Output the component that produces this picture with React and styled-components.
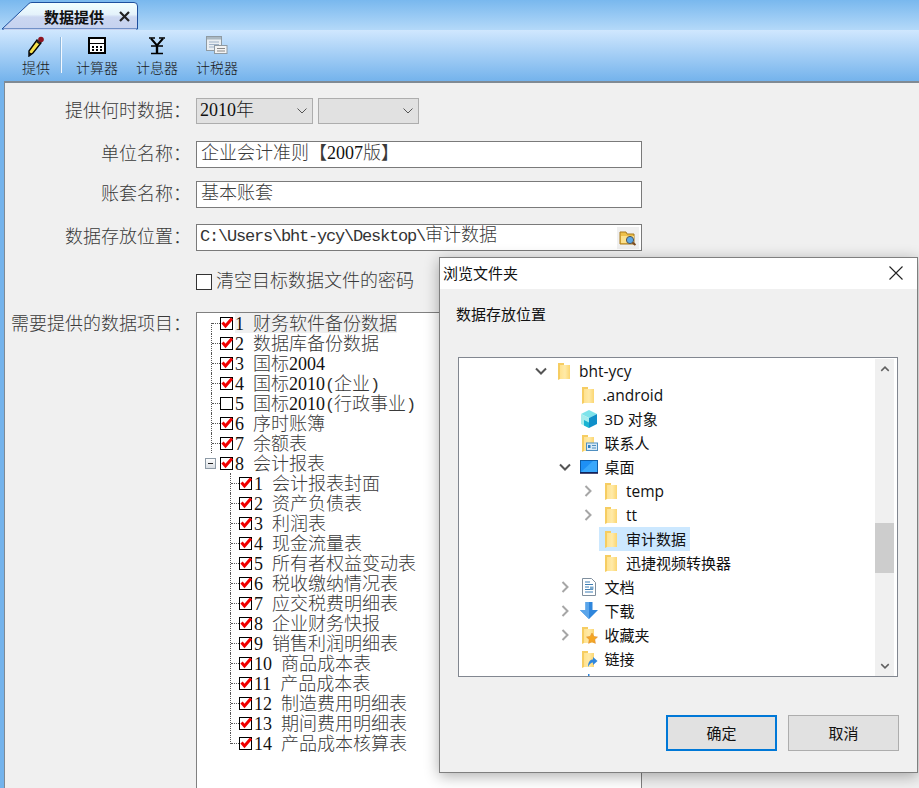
import React from "react";
import styled, { createGlobalStyle } from "styled-components";

const GlobalStyle = createGlobalStyle`
  html, body {
    margin: 0;
    padding: 0;
    overflow: hidden;
    background: #f0f0f0;
  }
  * { box-sizing: border-box; }
`;

const Page = styled.div`
  position: relative;
  width: 919px;
  height: 788px;
  overflow: hidden;
  background: linear-gradient(#d0e7fe 30px, #74b3ec 81px, #74b3ec);
  font-family: "Liberation Serif", "Noto Sans CJK SC", serif;
  font-weight: 300;
  color: #3a3a3a;
`;

const TabStrip = styled.div`
  height: 30px;
  padding: 2px 0 0 2px;
  background: linear-gradient(#79b8ee, #b4d9f9);
`;

const Tab = styled.div`
  position: relative;
  width: 137px;
  height: 28px;
  display: flex;
  align-items: center;
  padding-left: 42px;
  font-family: "Noto Sans CJK SC", sans-serif;
  font-size: 15px;
  font-weight: 700;
  color: #111;

  > svg:first-child {
    position: absolute;
    left: 0;
    top: 0;
  }
  span, svg:last-child { position: relative; }
  svg:last-child { margin-left: 15px; }
`;

const Toolbar = styled.div`
  height: 51px;
  display: flex;
  align-items: flex-start;
  padding: 5px 0 0 22px;
`;

const ToolItem = styled.div`
  display: flex;
  flex-direction: column;
  align-items: center;
  margin-right: 18px;
  font-size: 14px;
  line-height: 20px;
  color: #1a1a1a;
  svg { display: block; height: 22px; margin-bottom: 2px; }
`;

const ToolSep = styled.div`
  width: 1px;
  height: 36px;
  margin: 2px 14px 0 -7px;
  background: #f4f9ff;
  box-shadow: -1px 0 0 #8db7dd;
`;

const Content = styled.div`
  height: 707px;
  margin-left: 4px;
  border-left: 1px solid #7f8a94;
  border-top: 2px solid #808a94;
  background: #f0f0f0;
  padding-top: 15px;
`;

const FormRow = styled.div`
  display: grid;
  grid-template-columns: 186px 1fr;
  column-gap: 5px;
  margin-top: ${(p) => p.$gap || 0}px;
  align-items: ${(p) => (p.$top ? "start" : "center")};
`;

const Label = styled.div`
  text-align: right;
  font-size: 18px;
  line-height: 24px;
  white-space: nowrap;
  padding-bottom: ${(p) => (p.$lift ? 2 : 0)}px;
`;

const Latin = styled.span`
  font-family: "Liberation Mono", monospace;
  font-weight: 400;
  font-size: 17px;
  letter-spacing: -1.2px;
  white-space: pre;
  color: #333;
`;

const Digits = styled.span`
  font-family: "Liberation Serif", serif;
  font-weight: 400;
  font-size: 18px;
  color: #111;
`;

const Mixed = ({ text }) =>
  text.split(/(\d+|[\x20-\x7e]+?(?=\d|[^\x20-\x7e]|$))/).map((part, i) => {
    if (/^\d+$/.test(part)) return <Digits key={i}>{part}</Digits>;
    if (/^[\x20-\x7e]+$/.test(part)) return <Latin key={i}>{part}</Latin>;
    return part;
  });

const SelectGroup = styled.div`
  display: flex;
  gap: 5px;
`;

const Select = styled.div`
  width: ${(p) => p.$width}px;
  height: 26px;
  display: flex;
  align-items: center;
  justify-content: space-between;
  padding: 0 4px 0 3px;
  border: 1px solid #adadad;
  background: #e1e1e1;
  font-size: 18px;
  color: #222;
`;

const FieldText = styled.span`
  margin-bottom: ${(p) => p.$lift}px;
  margin-left: ${(p) => p.$indent || 0}px;
  line-height: 20px;
`;

const Input = styled.div`
  width: 446px;
  height: 27px;
  display: flex;
  align-items: center;
  justify-content: space-between;
  padding: 0 2px 0 4px;
  border: 1px solid #7a7a7a;
  background: #fff;
  font-size: 18px;
  white-space: nowrap;
`;

const BrowseButton = styled.div`
  width: 22px;
  height: 22px;
  display: flex;
  align-items: center;
  justify-content: center;
  background: #f0f0f0;
`;

const CheckLine = styled.div`
  display: flex;
  align-items: center;
  font-size: 18px;
  height: 16px;
`;

const BigCheck = styled.span`
  width: 16px;
  height: 16px;
  margin-right: 4px;
  border: 1px solid #333;
  background: #fff;
`;

const TreePanel = styled.div`
  width: 446px;
  height: 520px;
  border: 1px solid #808080;
  background: #fff;
`;

const TreeRow = styled.div`
  height: 20px;
  display: flex;
  align-items: flex-start;
  padding-left: ${(p) => (p.$depth ? 33 : 14)}px;
  font-size: 18px;
  white-space: nowrap;
`;

const Elbow = styled.span`
  position: relative;
  width: 9px;
  height: 20px;
  flex: none;

  &::before {
    content: "";
    position: absolute;
    left: 0;
    top: ${(p) => (p.$first ? "10px" : "0")};
    height: ${(p) => (p.$last || p.$first ? "11px" : "20px")};
    border-left: 1px dotted #555;
  }
  &::after {
    content: "";
    position: absolute;
    left: 1px;
    width: 8px;
    top: 10px;
    border-top: 1px dotted #555;
  }
`;

const Expander = styled.span`
  position: relative;
  width: 11px;
  height: 11px;
  flex: none;
  margin: 5px 4px 0 -6px;
  border: 1px solid #8d9aa6;
  background: linear-gradient(#fff, #d8dde3);

  &::after {
    content: "";
    position: absolute;
    left: 2px;
    right: 2px;
    top: 4px;
    height: 1px;
    background: #222;
  }
`;

const TreeCheck = styled.span`
  width: 13px;
  height: 13px;
  flex: none;
  margin: 4px 2px 0 0;
  border: 1px solid #000;
  background: #fff;
  svg { display: block; margin: -1px 0 0 0; overflow: visible; }
`;

const TreeText = styled.span`
  background: ${(p) => (p.$hover ? "#f0f0f0" : "transparent")};
  line-height: 22px;
  height: 20px;
`;

const Dialog = styled.div`
  position: absolute;
  left: 439px;
  top: 257px;
  width: 479px;
  height: 516px;
  border: 1px solid #7f7f7f;
  background: #f0f0f0;
  box-shadow: 0 3px 14px rgba(0, 0, 0, 0.32);
  font-family: "Open Sans", "Noto Sans CJK SC", sans-serif;
  font-weight: 400;
  font-size: 15px;
  color: #111;
`;

const DialogTitle = styled.div`
  height: 31px;
  display: flex;
  align-items: center;
  justify-content: space-between;
  padding: 0 14px 2px 3px;
  background: #fff;
`;

const DialogBody = styled.div`
  padding: 15px 18px 0 16px;
`;

const DialogLabel = styled.div`
  height: 20px;
  line-height: 20px;
`;

const FolderBox = styled.div`
  display: flex;
  width: 440px;
  height: 320px;
  margin: 33px 0 0 2px;
  padding: 1px 3px 0 0;
  border: 1px solid #828790;
  background: #fff;
`;

const FolderRows = styled.div`
  flex: 1;
  overflow: hidden;
`;

const FolderRow = styled.div`
  height: 24px;
  display: flex;
  align-items: center;
  padding-left: ${(p) => 74 + p.$depth * 23.5}px;
  white-space: nowrap;
`;

const Toggle = styled.span`
  width: 16px;
  height: 16px;
  flex: none;
  margin-right: 3px;
  svg { display: block; }
`;

const FolderLabel = styled.span`
  display: flex;
  align-items: center;
  gap: 7px;
  height: 24px;
  padding: 0 4px;
  background: ${(p) => (p.$selected ? "#cce8ff" : "transparent")};
  svg { display: block; flex: none; }
`;

const FolderName = styled.span`
  font-size: ${(p) => (p.$latin ? "15.500px" : "15px")};
  margin-bottom: ${(p) => (p.$latin ? 0 : 2)}px;
`;

const Scrollbar = styled.div`
  width: 19px;
  display: flex;
  flex-direction: column;
  background: #f0f0f0;
`;

const ScrollArrow = styled.div`
  height: 20px;
  display: flex;
  align-items: center;
  justify-content: center;
  margin-top: ${(p) => (p.$end ? "auto" : "0")};
`;

const ScrollThumb = styled.div`
  height: 50px;
  margin-top: 144px;
  background: #cdcdcd;
`;

const ButtonRow = styled.div`
  display: flex;
  justify-content: flex-end;
  gap: 11px;
  margin-top: 38px;
`;

const DialogButton = styled.div`
  width: 111px;
  height: 36px;
  display: flex;
  align-items: center;
  justify-content: center;
  padding-bottom: 2px;
  background: #e1e1e1;
  border: ${(p) => (p.$primary ? "2px solid #0078d7" : "1px solid #adadad")};
`;

const Chevron = ({ open, up, color, size = 16 }) => (
  <svg width={size} height={size} viewBox="0 0 16 16" fill="none" stroke={color} strokeWidth="2">
    <path d={up ? "M3 10.500l5-5 5 5" : open ? "M3 5.500l5 5 5-5" : "M5.500 3l5 5-5 5"} />
  </svg>
);

const SelectChevron = () => (
  <svg width="12" height="8" viewBox="0 0 12 8" fill="none" stroke="#555" strokeWidth="1">
    <path d="M1.500 1.500L6 6l4.500-4.500" />
  </svg>
);

const PenIcon = () => (
  <svg width="20" height="22" viewBox="0 0 20 22">
    <path d="M11 5l4 3-8 10-4 3 0-5z" fill="#f6e04a" stroke="#000" strokeWidth="1.400" />
    <path d="M11.500 5l3.500 2.500-1.600 2-3.400-2.500z" fill="#222" />
    <circle cx="15" cy="4.500" r="2.800" fill="#8e1420" />
    <path d="M3 17v4l3-2.200z" fill="#111" />
  </svg>
);

const CalcIcon = () => (
  <svg width="18" height="22" viewBox="0 0 18 18">
    <rect x="0" y="0" width="18" height="17" fill="#000" />
    <rect x="2" y="2" width="14" height="4" fill="#fff" />
    <rect x="2" y="7" width="14" height="8" fill="#fff" />
    <path d="M4 9h2v2H4zM8 9h2v2H8zM12 9h2v2h-2zM4 12h2v2H4zM8 12h2v2H8zM12 12h2v2h-2z" fill="#000" />
  </svg>
);

const YenIcon = () => (
  <svg width="20" height="22" viewBox="0 0 20 20" fill="none" stroke="#000">
    <path d="M2 2h6M12 2h6" strokeWidth="1.600" />
    <path d="M4 2.500l6 7 6-7" strokeWidth="2" />
    <path d="M10 9v8" strokeWidth="2.400" />
    <path d="M4 10h12M4 17.500h12" strokeWidth="1.400" />
  </svg>
);

const TaxIcon = () => (
  <svg width="22" height="22" viewBox="0 0 22 20">
    <rect x="0.500" y="0.500" width="15" height="14" fill="#e9eef2" stroke="#8f9aa2" />
    <rect x="1" y="1" width="14" height="2.500" fill="#aab8c2" />
    <path d="M3 6h10M3 8.500h10M3 11h10" stroke="#9fb2c8" />
    <rect x="8.500" y="9.500" width="12.500" height="8" fill="#f3f3f3" stroke="#8f9aa2" />
    <path d="M11 12.500h8M11 15h8" stroke="#888" />
  </svg>
);

const CloseTabIcon = () => (
  <svg width="11" height="11" viewBox="0 0 11 11" stroke="#222" strokeWidth="2.200">
    <path d="M1 1l9 9M10 1l-9 9" />
  </svg>
);

const TabShape = () => (
  <svg width="137" height="28" viewBox="0 0 137 28">
    <defs>
      <linearGradient id="tabFill" x1="0" y1="0" x2="0" y2="1">
        <stop offset="0" stopColor="#f2ffff" />
        <stop offset="0.450" stopColor="#e4f2fb" />
        <stop offset="0.550" stopColor="#cbd7f1" />
        <stop offset="1" stopColor="#c5d2ef" />
      </linearGradient>
    </defs>
    <path d="M0 27L27 1.500Q28 .5 30 .5H132Q135.500 .5 135.500 4V27z" fill="url(#tabFill)" stroke="#1d4f9e" />
    <path d="M2 28h132" stroke="#c5d2ef" strokeWidth="2" />
  </svg>
);

const RedTick = () => (
  <svg width="11" height="12" viewBox="0 0 11 12" fill="none" stroke="#f00000" strokeWidth="3">
    <path d="M1.500 5.500l3 3.500L11 1.500" />
  </svg>
);

const BrowseIcon = () => (
  <svg width="18" height="16" viewBox="0 0 18 16">
    <path d="M1 2h6l1 2h7v10H1z" fill="#eec04a" stroke="#a87a1e" />
    <path d="M2 6h13v7H2z" fill="#fbe08c" />
    <circle cx="11" cy="10" r="3.600" fill="#5aa8e8" stroke="#555" />
    <path d="M13.500 12.500l3 2.500" stroke="#7a4a20" strokeWidth="2" />
  </svg>
);

const FolderShape = () => (
  <>
    <defs>
      <linearGradient id="folderFill" x1="0" y1="0" x2="1" y2="0">
        <stop offset="0" stopColor="#ffe28f" />
        <stop offset="0.500" stopColor="#ffeaa8" />
        <stop offset="1" stopColor="#fbd672" />
      </linearGradient>
    </defs>
    <path d="M2 1h6v3H4v13l-2 1z" fill="#f6cd62" />
    <path d="M4 3h10v14H4z" fill="url(#folderFill)" />
  </>
);

const FolderIcon = () => (
  <svg width="16" height="18" viewBox="0 0 16 18">
    <FolderShape />
  </svg>
);

const CubeIcon = () => (
  <svg width="18" height="18" viewBox="0 0 18 18">
    <path d="M9 0l8 4-8 4-8-4z" fill="#7de3ea" />
    <path d="M1 4l8 4v10l-8-4z" fill="#a5ecec" />
    <path d="M17 4L9 8v10l8-4z" fill="#0f8fc9" />
    <path d="M4 10l5 2.500V18l-5-2.500z" fill="#1ab4d2" />
  </svg>
);

const ContactIcon = () => (
  <svg width="18" height="18" viewBox="0 0 18 18">
    <FolderShape />
    <rect x="6.500" y="9" width="11" height="7.500" fill="#d8eaf6" stroke="#4f8fc0" />
    <rect x="8" y="11" width="2.500" height="3" fill="#2f7fc0" />
    <path d="M12 11.500h4M12 14h4" stroke="#4f8fc0" />
  </svg>
);

const DesktopIcon = () => (
  <svg width="18" height="18" viewBox="0 0 18 18">
    <rect x="0.500" y="2.500" width="17" height="12" fill="#1e90f5" stroke="#0f5da8" />
    <path d="M1 14L13 3h4v11z" fill="#3aa8fb" />
    <path d="M0 15h18" stroke="#114" strokeWidth="1.500" />
  </svg>
);

const DocIcon = () => (
  <svg width="18" height="18" viewBox="0 0 18 18">
    <path d="M2.500 0.500h9l4 4v13h-13z" fill="#fff" stroke="#7f8f9e" />
    <path d="M5 4h5M5 6.500h8M5 9h4M5 11.500h8M5 14h8" stroke="#3f7fb5" />
    <path d="M10 8.500h3.500v3H10z" fill="#7aa8cc" />
  </svg>
);

const DownloadIcon = () => (
  <svg width="18" height="18" viewBox="0 0 18 18">
    <path d="M5.500 0h7v8H18l-9 9-9-9h5.500z" fill="#2f86dc" />
    <path d="M5.500 0h3.500v17L0 8h5.500z" fill="#5aa5ea" />
  </svg>
);

const StarIcon = () => (
  <svg width="18" height="18" viewBox="0 0 18 18">
    <FolderShape />
    <path d="M12 7l1.800 3.400 3.700.6-2.700 2.600.6 3.800-3.400-1.800-3.400 1.800.6-3.800L6.500 11l3.700-.6z" fill="#f5a623" stroke="#d9822b" strokeWidth=".5" />
  </svg>
);

const LinkIcon = () => (
  <svg width="18" height="18" viewBox="0 0 18 18">
    <FolderShape />
    <path d="M8 17c0-5 2-7.500 5-7.500V7l4.500 4-4.500 4v-2.500c-2 0-3.500 1.500-5 4.500z" fill="#2f86dc" />
  </svg>
);

const HiddenIcon = () => (
  <svg width="18" height="18" viewBox="0 0 18 18">
    <rect x="8" y="0" width="1.500" height="3" fill="#2f86dc" />
  </svg>
);

const DialogClose = () => (
  <svg width="14" height="14" viewBox="0 0 14 14" stroke="#222" strokeWidth="1.100">
    <path d="M.5.5l13 13M13.500.5l-13 13" />
  </svg>
);

const topRows = [
  { text: "1 财务软件备份数据", hover: true },
  { text: "2 数据库备份数据" },
  { text: "3 国标2004" },
  { text: "4 国标2010(企业)" },
  { text: "5 国标2010(行政事业)", off: true },
  { text: "6 序时账簿" },
  { text: "7 余额表" },
];

const childRows = [
  "1 会计报表封面",
  "2 资产负债表",
  "3 利润表",
  "4 现金流量表",
  "5 所有者权益变动表",
  "6 税收缴纳情况表",
  "7 应交税费明细表",
  "8 企业财务快报",
  "9 销售利润明细表",
  "10 商品成本表",
  "11 产品成本表",
  "12 制造费用明细表",
  "13 期间费用明细表",
  "14 产品成本核算表",
];

const folders = [
  { depth: 0, name: "bht-ycy", toggle: "open", Icon: FolderIcon },
  { depth: 1, name: ".android", Icon: FolderIcon },
  { depth: 1, name: "3D 对象", Icon: CubeIcon },
  { depth: 1, name: "联系人", Icon: ContactIcon },
  { depth: 1, name: "桌面", toggle: "open", Icon: DesktopIcon },
  { depth: 2, name: "temp", toggle: "closed", Icon: FolderIcon },
  { depth: 2, name: "tt", toggle: "closed", Icon: FolderIcon },
  { depth: 2, name: "审计数据", selected: true, Icon: FolderIcon },
  { depth: 2, name: "迅捷视频转换器", Icon: FolderIcon },
  { depth: 1, name: "文档", toggle: "closed", Icon: DocIcon },
  { depth: 1, name: "下载", toggle: "closed", Icon: DownloadIcon },
  { depth: 1, name: "收藏夹", toggle: "closed", Icon: StarIcon },
  { depth: 1, name: "链接", Icon: LinkIcon },
  { depth: 1, name: "", Icon: HiddenIcon },
];

const App = () => (
  <Page>
    <GlobalStyle />
    <TabStrip>
      <Tab>
        <TabShape />
        <span>数据提供</span>
        <CloseTabIcon />
      </Tab>
    </TabStrip>
    <Toolbar>
      <ToolItem><PenIcon />提供</ToolItem>
      <ToolSep />
      <ToolItem><CalcIcon />计算器</ToolItem>
      <ToolItem><YenIcon />计息器</ToolItem>
      <ToolItem><TaxIcon />计税器</ToolItem>
    </Toolbar>
    <Content>
      <FormRow>
        <Label>提供何时数据：</Label>
        <SelectGroup>
          <Select $width={117}><FieldText $lift={3}><Mixed text="2010年" /></FieldText><SelectChevron /></Select>
          <Select $width={101}><span /><SelectChevron /></Select>
        </SelectGroup>
      </FormRow>
      <FormRow $gap={17}>
        <Label $lift>单位名称：</Label>
        <Input><FieldText $lift={3}><Mixed text="企业会计准则【2007版】" /></FieldText></Input>
      </FormRow>
      <FormRow $gap={13}>
        <Label $lift>账套名称：</Label>
        <Input><FieldText $lift={3}>基本账套</FieldText></Input>
      </FormRow>
      <FormRow $gap={16}>
        <Label $lift>数据存放位置：</Label>
        <Input>
          <FieldText $lift={3} $indent={-1}><Mixed text="C:\Users\bht-ycy\Desktop\审计数据" /></FieldText>
          <BrowseButton><BrowseIcon /></BrowseButton>
        </Input>
      </FormRow>
      <FormRow $gap={23}>
        <span />
        <CheckLine><BigCheck /><FieldText $lift={2}>清空目标数据文件的密码</FieldText></CheckLine>
      </FormRow>
      <FormRow $gap={22} $top>
        <Label>需要提供的数据项目：</Label>
        <TreePanel>
          {topRows.map((row, i) => (
            <TreeRow key={row.text}>
              <Elbow $first={i === 0} />
              <TreeCheck>{!row.off && <RedTick />}</TreeCheck>
              <TreeText $hover={row.hover}><Mixed text={row.text} /></TreeText>
            </TreeRow>
          ))}
          <TreeRow>
            <Expander />
            <TreeCheck><RedTick /></TreeCheck>
            <TreeText><Mixed text="8 会计报表" /></TreeText>
          </TreeRow>
          {childRows.map((text, i) => (
            <TreeRow key={text} $depth={1}>
              <Elbow $last={i === childRows.length - 1} />
              <TreeCheck><RedTick /></TreeCheck>
              <TreeText><Mixed text={text} /></TreeText>
            </TreeRow>
          ))}
        </TreePanel>
      </FormRow>
    </Content>

    <Dialog>
      <DialogTitle>
        <span>浏览文件夹</span>
        <DialogClose />
      </DialogTitle>
      <DialogBody>
        <DialogLabel>数据存放位置</DialogLabel>
        <FolderBox>
          <FolderRows>
            {folders.map(({ depth, name, toggle, selected, Icon }, i) => (
              <FolderRow key={i} $depth={depth}>
                <Toggle>
                  {toggle === "open" && <Chevron open color="#555" />}
                  {toggle === "closed" && <Chevron color="#a6a6a6" />}
                </Toggle>
                <FolderLabel $selected={selected}>
                  <Icon />
                  <FolderName $latin={/^[\x20-\x7e]+$/.test(name)}>{name}</FolderName>
                </FolderLabel>
              </FolderRow>
            ))}
          </FolderRows>
          <Scrollbar>
            <ScrollArrow><Chevron up color="#606060" size={12} /></ScrollArrow>
            <ScrollThumb />
            <ScrollArrow $end><Chevron open color="#606060" size={12} /></ScrollArrow>
          </Scrollbar>
        </FolderBox>
        <ButtonRow>
          <DialogButton $primary>确定</DialogButton>
          <DialogButton>取消</DialogButton>
        </ButtonRow>
      </DialogBody>
    </Dialog>
  </Page>
);

export default App;
